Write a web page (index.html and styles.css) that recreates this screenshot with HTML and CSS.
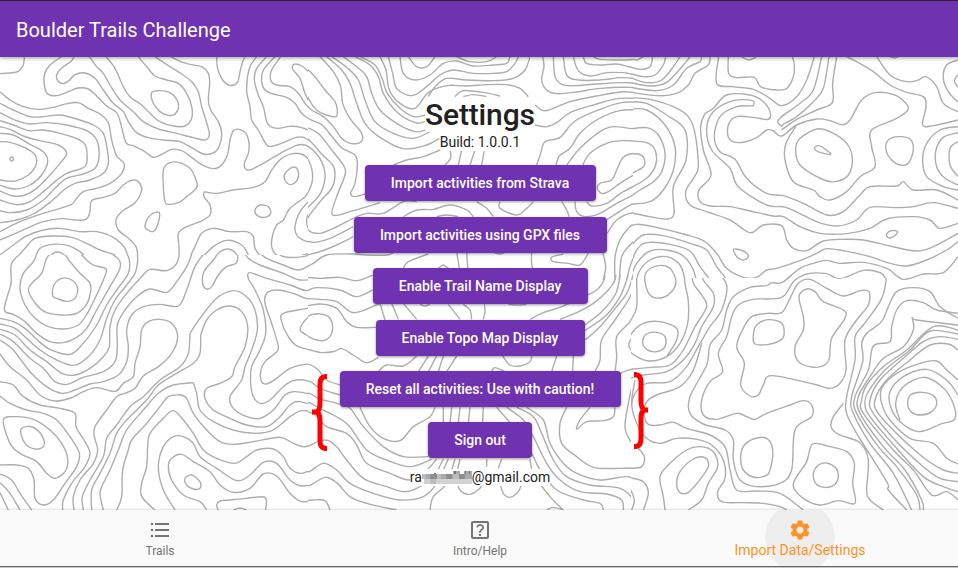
FILE: index.html
```html
<!DOCTYPE html>
<html lang="en">
<head>
<meta charset="utf-8">
<title>Boulder Trails Challenge</title>
<link rel="stylesheet" href="styles.css">
</head>
<body>
<header class="appbar">Boulder Trails Challenge</header>
<main class="content">
  <svg class="topo" id="topo" width="958" height="568" viewBox="0 0 958 568" aria-hidden="true"></svg>
  <h1 class="heading"><span>Settings</span></h1>
  <p class="build"><span>Build: 1.0.0.1</span></p>
  <div class="actions">
    <button class="btn strava">Import activities from Strava</button>
    <button class="btn gpx">Import activities using GPX files</button>
    <button class="btn names">Enable Trail Name Display</button>
    <button class="btn map">Enable Topo Map Display</button>
    <button class="btn reset">Reset all activities: Use with caution!</button>
    <button class="btn signout">Sign out</button>
  </div>
  <p class="email"><span>ra<i class="mosaic"><svg width="50" height="14" viewBox="0 0 50 14" shape-rendering="crispEdges"><path fill="#aaa" d="M0 0h50v8H0z"/><path fill="#d2d2d2" d="M2 8h48v5H2z"/><path fill="#8e8e8e" d="M8 3h7v5H8zM24 3h6v5h-6zM37 3h6v5h-6z"/><path fill="#bcbcbc" d="M0 3h4v5H0zM15 3h4v5h-4zM31 3h6v5h-6z"/><path fill="#fff" d="M0 0h31v3H0zM38 0h4v3h-4z"/><path fill="#777" d="M12 2h2v1h-2zM32 0h2v3h-2zM43 0h1v3h-1zM47 0h1v3h-1z"/><path fill="#bdbdbd" d="M8 8h6v5H8z"/></svg></i>@gmail.com</span></p>
  <svg class="brace left" width="16" height="77" viewBox="0 0 16 77"><path d="M15 2.5H13.5Q8 3 8 10V29Q8 37 4 38 8 39 8 46V66Q8 74 13 74.500H15M0 38H6"/></svg>
  <svg class="brace right" width="16" height="77" viewBox="0 0 16 77"><path d="M1 2.500H2.500Q8 3 8 10V29Q8 37 12 38 8 39 8 46V66Q8 74 3 74.500H1M10 38H15"/></svg>
</main>
<nav class="tabs">
  <a class="tab">
    <svg width="24" height="24" viewBox="0 0 24 24"><path d="M8 6h14v2H8zM8 12h14v2H8zM8 18h14v2H8z" transform="translate(-1 -1)"/><circle cx="4" cy="6" r="1.300"/><circle cx="4" cy="12" r="1.300"/><circle cx="4" cy="18" r="1.300"/></svg>
    <span>Trails</span>
  </a>
  <a class="tab">
    <svg width="24" height="24" viewBox="0 0 24 24"><path fill-rule="evenodd" d="M5 3h14a2 2 0 0 1 2 2v14a2 2 0 0 1-2 2H5a2 2 0 0 1-2-2V5a2 2 0 0 1 2-2zm0 2v14h14V5z"/><path d="M11 16h2v2h-2zM12.600 6C10.500 5.800 8.600 7.200 8.300 9.200l1.700.4c.2-1.200 1.200-2 2.400-1.900 1 .1 1.800.9 1.800 1.900 0 1.600-3.200 2-3.200 5.200h1.800c0-2.400 3.200-2.600 3.200-5.300C16 7.700 14.600 6.200 12.600 6z"/></svg>
    <span>Intro/Help</span>
  </a>
  <a class="tab active">
    <svg width="24" height="24" viewBox="0 0 24 24"><path d="M19.140 12.940c.04-.3.060-.61.060-.94 0-.32-.02-.64-.07-.94l2.030-1.580c.18-.14.23-.41.12-.61l-1.920-3.320c-.12-.22-.37-.29-.59-.22l-2.390.96c-.5-.38-1.030-.7-1.620-.94l-.36-2.540c-.04-.24-.24-.41-.48-.41h-3.840c-.24 0-.43.17-.47.41l-.36 2.540c-.59.24-1.130.57-1.620.94l-2.390-.96c-.22-.08-.47 0-.59.22L2.740 8.870c-.12.21-.08.47.12.61l2.030 1.580c-.05.3-.09.63-.09.94s.02.64.07.94l-2.030 1.580c-.18.14-.23.41-.12.61l1.920 3.320c.12.22.37.29.59.22l2.390-.96c.5.38 1.030.7 1.620.94l.36 2.540c.05.24.24.41.48.41h3.840c.24 0 .44-.17.47-.41l.36-2.540c.59-.24 1.130-.56 1.620-.94l2.390.96c.22.08.47 0 .59-.22l1.920-3.320c.12-.22.070-.47-.12-.61l-2.010-1.580zM12 15.600c-1.980 0-3.600-1.620-3.600-3.600s1.620-3.600 3.600-3.600 3.600 1.620 3.600 3.600-1.620 3.600-3.600 3.600z"/></svg>
    <span>Import Data/Settings</span>
  </a>
</nav>
<div class="edge"></div>
<script src="topo.js"></script>
</body>
</html>
```
FILE: styles.css
```css
* { box-sizing: border-box; }
html { overflow: hidden; }
body {
  margin: 0;
  width: 960px;
  height: 568px;
  overflow: hidden;
  display: flex;
  flex-direction: column;
  font-family: Roboto, "Liberation Sans", sans-serif;
  color: #212121;
  background: #fff;
}
.appbar {
  flex: none;
  height: 57px;
  padding-left: 16px;
  border-top: 1px solid #2b2233;
  background: #6f32b1;
  color: #fff;
  font-size: 20px;
  line-height: 58px;
  position: relative;
  z-index: 2;
  box-shadow: 0 1px 4px rgba(0, 0, 0, .4);
}
.content {
  flex: none;
  height: 453px;
  padding-top: 40px;
  position: relative;
  display: flex;
  flex-direction: column;
  align-items: center;
}
.topo { position: absolute; left: 0; top: -57px; }
.topo path { fill: none; stroke: #adadad; stroke-width: 4.2; }
.heading, .build, .email { margin: 0; position: relative; white-space: nowrap; }
.heading span, .build span, .email > span { display: block; background: #fff; }
.heading { font-size: 30px; font-weight: 500; line-height: 35px; width: 110px; }
.heading span { letter-spacing: -.15px; }
.build { font-size: 14px; line-height: 17px; margin-top: 2px; }
.actions {
  position: relative;
  display: flex;
  flex-direction: column;
  align-items: center;
  gap: 15.4px;
  margin-top: 14.4px;
}
.btn {
  height: 36px;
  padding: 0;
  border: 0;
  border-radius: 4px;
  background: #6f32b1;
  color: #fff;
  font: 500 14px/36px Roboto, sans-serif;
  white-space: nowrap;
  box-shadow: 0 1px 3px rgba(0, 0, 0, .4);
}
.strava { width: 231px; }
.gpx { width: 253px; }
.names { width: 215px; }
.map { width: 209px; }
.reset { width: 281px; }
.signout { width: 104px; }
.email { font-size: 14px; line-height: 17px; margin-top: 10.6px; }
.email > span { display: flex; height: 17px; }
.mosaic { display: block; width: 50px; height: 14px; padding-top: 2px; }
.mosaic svg { display: block; }
.brace { position: absolute; }
.brace path { fill: none; stroke: #f00; stroke-width: 5; }
.brace.left { left: 312px; top: 317px; }
.brace.right { left: 633px; top: 315px; }
.tabs {
  flex: none;
  height: 56px;
  display: flex;
  position: relative;
  background: #fafafa;
  box-shadow: 0 -1px 2px rgba(0, 0, 0, .12);
}
.tab {
  flex: 1;
  display: flex;
  flex-direction: column;
  align-items: center;
  padding-top: 8px;
  color: #757575;
  font-size: 12px;
  line-height: 14px;
  overflow: hidden;
}
.tab svg { fill: currentColor; flex: none; }
.tab span { margin-top: 2px; }
.active {
  color: #ff9226;
  font-size: 14px;
  line-height: 16px;
  background: radial-gradient(circle at 50% 27px, #eee 34.5px, transparent 35px);
}
.active span { margin-top: 0; }
.edge { height: 2px; background: #c8c8c8; border-top: 1px solid #666; }
```
FILE: topo.js
```js
// Contour lines, one sheet per map tile. Points are in thirds of a pixel
// from the tile's origin; a trailing z closes the contour.
var sheets = [
{ o: [0, 0], c: [0, 57, 308, 198], l: `
73,170 70,195 55,214 30,219 0,221
222,170 214,183 185,204 170,225 174,243 190,251 207,242 225,224 255,219 285,235 310,270 340,310 370,335 385,365 410,398 445,413 490,420 540,425 575,443 610,462 640,459 658,438 665,400 655,365 632,330 625,300 629,250 625,220 605,200 570,193 540,184 512,170
185,170 150,195 133,225 135,265 145,283 170,287 200,277 235,264 265,267 290,288 320,318 350,338 362,370 378,428 400,437 430,452 460,472 485,463 515,448 545,452 575,472 605,494 640,506 665,495 683,462 690,420 700,392 718,388 738,400 747,430 745,460 733,490 738,508 755,508 790,490 850,455 890,436 915,435 935,448 965,480
268,170 290,200 310,220 330,255 360,300 400,335 430,365 475,387 530,400 580,413 615,420 628,405 622,375 605,320 595,275 575,245 545,222 505,197 465,170
318,170 345,205 370,260 390,290 425,315 450,340 480,365 520,378 555,378 575,355 575,320 560,280 535,250 500,240 465,228 440,200 415,170
455,278 480,272 510,278 530,298 536,320 525,342 505,346 480,335 460,310z
650,170 653,205 668,240 690,256 712,247 720,215 728,185 735,170
770,170 748,205 740,270 750,320 755,360 775,390 800,435 820,438 850,428 890,412 920,417 965,460
800,170 770,205 763,240 775,285 790,320 800,365 812,380 835,385 870,379 905,383 960,405
825,170 790,210 785,245 795,270 820,282 860,292 885,310 905,340 930,358 965,372
842,170 815,210 812,240 830,255 870,260 895,280 915,310 935,330 965,345
960,255 930,220 905,198 882,193 878,208 900,235 915,280 935,315 960,330
0,275 30,300 70,320 115,328 160,322 200,311 235,308 265,325 300,342 325,368 335,420 350,468 372,490 365,520 330,550 290,565 250,575 230,595 215,613 180,625 120,643 60,665 0,695
0,310 40,330 90,350 130,350 180,345 230,357 280,375 310,400 322,450 325,490 310,520 270,540 225,550 195,567 150,607 100,642 50,660 0,668
0,338 50,362 90,372 140,368 200,375 260,392 290,420 297,470 285,505 250,522 200,535 165,565 130,600 80,630 30,638 0,632
0,362 40,375 85,392 130,390 180,400 235,418 258,440 260,490 245,505 200,520 165,545 130,575 90,605 50,614 0,600
0,380 30,388 70,408 120,422 175,435 200,460 180,490 145,530 110,565 75,585 40,588 0,573
0,400 40,405 85,430 130,455 143,485 125,525 90,555 45,567 0,556
0,425 30,427 75,443 105,465 108,495 85,525 50,542 20,543 0,539
29,477 35,471 41,477 35,483z
415,780 408,740 385,715 355,690 348,660 365,635 405,608 425,570 415,545 395,541 370,555 345,580 310,592 275,602 270,635 258,658 225,660 185,656 130,665 80,685 40,703 0,720
385,780 375,745 340,712 290,695 240,695 180,685 130,690 80,708 40,735 0,765
360,780 340,763 300,750 260,730 215,712 160,708 105,715 75,745 45,780
265,780 240,755 205,737 160,733 120,745 103,780
140,780 160,760 180,757 205,775 210,782
490,510 505,490 535,487 570,505 588,540 590,563 560,590 535,608 505,613 495,605 490,560z
477,637 455,642 438,665 437,685 458,695 470,682 478,655z
613,575 650,580 700,570 760,562 795,545 815,510 845,475 885,460 920,472 940,510 935,555 915,590 870,625 850,660 830,675 818,705 815,740 830,765 870,773 910,765 960,752
613,575 612,590 630,615 630,645 600,665 560,680 535,700 537,740 538,782
852,530 868,507 888,503 896,525 885,548 865,552z
765,630 780,615 805,620 812,640 795,652 772,647z
960,580 920,610 895,645 885,690 900,715 930,727 960,728
960,620 930,635 920,660 925,685 945,697 960,699
565,780 585,740 605,700 640,685 690,695 740,695 760,710 765,745 790,780
600,780 640,740 680,721 725,735 745,765 752,780
640,780 660,755 685,747 708,760 713,780` },
{ o: [0, 250], c: [0, 255, 308, 256], l: `
20,0 0,14
75,0 35,40 33,100 13,178 40,193 75,215 110,250 150,275 190,278 230,262 260,235 290,180 330,110 358,60 360,35 340,15 295,0
115,0 100,35 70,70 60,115 75,165 105,205 145,230 190,237 235,225 262,190 285,145 310,90 318,57 280,45 250,20 230,0
85,120 100,95 125,70 140,25 160,8 190,10 210,35 240,70 270,100 270,135 255,170 225,192 185,195 140,188 110,165z
158,138 162,105 185,85 215,90 233,115 225,145 200,154 175,147z
0,205 40,215 75,235 110,268 150,298 210,313 250,280 290,225 320,165 350,120 385,70 388,30 375,0
0,222 45,235 80,265 120,300 170,330 220,346 265,320 300,270 320,205 345,150 380,105 405,70 413,30 410,0
0,238 45,255 90,300 140,335 185,370 225,375 270,355 310,320 328,290 330,230 345,180 380,130 425,80 450,58 500,62 530,40 540,0
0,252 40,275 90,325 130,355 165,395 200,403 250,382 310,365 345,335 352,290 352,225 375,180 410,140 450,117 500,127 530,95 560,50 580,0
0,270 40,300 90,365 140,410 185,430 225,420 270,402 310,395 355,375 380,335 385,290 380,240 395,195 430,170 480,163 535,168 560,120 585,50 620,0
0,312 30,350 80,390 120,435 165,453 215,443 250,425 290,413 345,424 370,400 400,380 405,340 420,290 425,240 445,215 480,208 515,220 533,260 515,310 475,350 430,378 405,415 375,430 350,440 320,480 285,530 283,560 293,600 280,640 240,690 220,740 222,780
0,395 40,405 70,440 120,465 180,475 225,490 228,530 255,575 270,610 255,650 215,700 190,750 188,780
0,438 30,460 80,480 130,490 170,510 210,560 238,610 230,650 195,700 160,750 130,765 105,745 102,690 85,655 50,645 0,645
10,510 45,500 100,508 150,540 185,580 203,625 195,665 165,685 140,670 110,635 60,610 30,580z
62,540 85,529 110,538 130,565 130,590 105,597 75,580z
0,672 35,690 60,730 95,780
0,698 30,730 60,780
0,728 25,780
690,0 712,15 708,40 680,50 655,75 635,110 620,117 608,100 612,65 640,30 660,5z
730,0 745,25 780,45 850,70 900,90 960,85
768,0 800,25 850,45 895,60 930,45 960,30
820,0 850,20 890,22 930,15 950,0
960,110 920,122 870,105 800,85 750,68 745,85 765,120 790,180 797,250 780,300 755,350 752,400 760,440 780,460 810,450 850,410 880,392 920,392 960,415
960,145 920,146 880,130 830,120 800,130 795,160 815,220 835,290 825,310 795,335 782,365 785,395 800,402 830,385 870,355 920,343 960,350
570,250 600,205 650,145 700,122 740,140 765,180 772,240 755,300 735,350 725,390 690,440 700,475 740,500 780,505 820,480 855,435 880,425 920,430 960,445
602,255 620,210 650,180 690,168 725,185 743,230 735,290 705,350 695,380 660,400 620,415 615,445 640,480 690,505 740,525 800,530 840,500 870,465 900,455 960,475
570,250 565,310 540,350 480,390 430,440 390,470 350,525 320,565 310,620 270,690 247,740 250,780
602,255 600,310 580,340 530,370 475,405 440,450 380,510 350,550 330,610 300,670 275,720 275,780
580,398 520,405 475,430 430,480 380,540 355,600 330,660 305,710 300,735 310,780
580,398 590,430 600,480 640,515 700,540 770,550 820,540 870,500 905,482 940,490 960,515
350,780 365,740 368,660 385,600 395,570 440,520 480,470 505,440 540,435 560,445 580,490 620,540 660,575 700,583 760,575 840,562 880,580 915,590 960,575
465,780 425,740 425,700 440,650 443,590 450,550 490,505 520,482 550,510 580,550 610,600 650,625 705,640 740,620 770,600 820,597 850,620 870,655 905,670 960,645
525,780 490,720 475,650 490,590 520,560 550,560 580,580 600,620 650,655 710,692 750,675 790,637 830,640 870,690 905,708 960,697
620,780 600,755 550,735 515,690 505,650 515,625 545,613 580,635 630,665 660,705 700,727 750,715 790,672 830,678 870,730 905,755 960,748
555,685 575,675 600,695 600,715 580,717 560,705z
655,780 650,765 660,753 690,750 740,745 795,742 797,780
700,780 720,774 740,780
960,162 920,175 850,190 845,215 865,260 895,290 960,305
960,192 930,197 905,225 902,243 930,260 960,270` },
{ o: [300, 50], c: [308, 57, 222, 218], l: `
-18,43 10,50 40,75 75,120 105,155 112,180 108,200 80,195 50,180 25,145 10,100 -18,60
60,20 100,65 122,110 128,160 150,205 185,250 182,277 150,280 125,265 100,230 70,200 35,180 15,160 0,140
80,20 125,60 150,100 170,160 195,220 240,262 310,296 380,285 418,265
95,20 140,52 175,90 195,150 225,215 280,250 340,265 390,245
130,20 170,50 200,80 215,130 240,180 290,220 345,245 375,240
165,20 210,45 235,80 250,130 290,185 345,218 375,215
180,20 225,45 246,85 262,130 300,175 340,200 375,195
240,20 258,60 268,120 300,160 345,175 385,128 440,107 500,108 560,104 620,104 660,115 685,140
265,20 278,70 290,115 335,137 380,110 420,75 460,60 520,70 580,70 620,65 645,40 655,20
385,140 405,110 440,85 500,90 580,92 640,85 675,60 690,20
300,20 310,70 345,90 390,75 430,40 470,33 520,48 580,45 620,40 630,20
325,20 350,50 380,50 405,20
470,20 510,35 560,35 590,20
465,140 490,122 550,127 600,138
490,140 520,134 560,140
0,185 30,208 65,224 90,252 125,293 165,315 172,345 165,400 152,430 165,440 195,432
0,232 30,236 60,255 95,300 130,345 135,375 110,440 98,495 160,482 240,458
0,263 25,268 65,312 98,345 105,375 95,415 60,455 20,510 25,540 60,550 100,535 160,505 200,490 250,490 310,455 350,455
0,286 30,293 65,335 75,385 55,440 0,492
0,312 25,330 38,380 25,425 0,445
0,565 40,577 90,565 160,530
0,620 60,605 110,585 160,560
0,660 40,640 80,615 160,612 200,615 260,615 280,608
0,685 80,685 140,680 190,688 215,680
310,655 325,635 385,612
415,655 430,645 445,655
280,345 320,330 370,320 420,300
450,300 452,325 435,345
485,300 475,345
525,300 510,345
553,300 545,345
310,500 350,480 400,478 450,465 500,480 520,500
410,500 440,495 475,500
530,455 560,475 580,500
600,455 600,475 650,495 680,475 700,455
470,605 478,655
500,605 503,655
575,605 600,612 620,605` },
{ o: [520, 50], c: [530, 57, 103, 223], l: `
68,20 72,50 65,90 80,120 110,131 170,126 240,115 330,112 390,121
100,20 105,80 125,103 160,107 230,102 300,98 340,99 390,108
130,20 140,75 175,90 240,90 300,83 340,85 390,97
160,20 175,62 210,78 260,68 310,68 340,73 390,82
190,20 200,40 240,45 290,42 330,51 365,57 390,48
220,20 240,28 300,30 345,28 365,20
45,165 70,182 100,175 150,155 230,138 300,126 340,127 390,135
45,225 80,230 110,218 150,188 220,165 300,145 390,148
50,345 62,310 75,275 120,262 165,213 240,178 310,157 390,160
108,345 118,318 150,295 180,250 230,210 300,182 390,180
140,345 180,295 240,245 280,230 340,236 390,233
188,345 210,310 260,280 310,272 390,277
345,310 310,322 290,360 275,390 240,400 232,415 245,430 265,425 300,400 350,369 372,350 372,320z
200,455 215,468 260,460 310,425 390,385
165,455 170,485 195,500 240,490 290,460 340,435 390,415
260,510 290,490 340,461 390,450
262,550 290,510 340,488 390,498
285,690 285,620 300,570 325,535 345,523 390,530
298,690 305,620 330,585 360,560 390,555
320,690 340,625 390,578
335,690 348,655 390,603
355,690 390,635
248,605 257,650 250,690
35,605 35,640 45,690
205,610 180,645 145,640 100,635 95,622 130,612
125,455 140,480 148,500
-60,455 -60,475 -10,495 20,475 40,455
20,0 28,30 20,50 0,70
-60,104 0,112 22,138` },
{ o: [300, 270], c: [308, 275, 323, 236], l: `
0,20 60,25 120,22 170,32 218,15
0,60 20,62 50,53 120,60 170,80 218,60
0,85 60,88 110,95 150,125 180,125 240,100
2,183 10,150 45,132 85,140 98,175 85,205 60,212 25,200z
0,112 60,102 110,115 140,155 170,172 228,172
0,232 60,247 100,245 125,236 160,255 200,278 235,262
235,305 260,285 310,288 350,258
0,284 30,284 55,300 80,330 120,345
0,332 30,334 60,355 120,375
0,365 30,371 60,387 110,400 150,415 190,470 250,530 310,560 384,560
240,100 255,150
275,100 295,148
310,100 350,148
360,103 375,108 390,103
445,103 480,148
490,103 510,120 515,148
553,103 555,125 550,148
625,103 655,105 680,103
690,148 730,128 780,112 840,85 890,60 912,30 915,0
780,148 830,128 880,100 925,60 945,30 948,0
855,165 905,125 945,75 958,30 962,0
855,182 920,135 960,80 980,30 988,0
855,210 900,170 950,110 980,70 995,30 1000,0
885,305 900,270 905,210 945,150 985,90 1010,40
945,305 950,260 950,200 990,155 1010,110
1030,180 995,205 988,232 1020,265
955,330 965,308 1000,297
820,258 818,305
385,258 355,305
410,258 385,305
430,258 415,305
470,258 440,305
608,258 630,285 660,288 690,275 695,258
575,305 585,293 615,305
770,258 755,305
180,412 210,470 250,505 300,512 340,470 390,440 405,412
0,395 30,399 60,416 100,435 145,465 200,540 260,570 330,590 395,568
0,423 20,424 45,435 80,470 140,490 170,525 200,580 270,610 330,630 380,600 410,567
0,525 20,530 60,512 85,512 110,530 140,570 190,625 260,650 310,665 350,655 400,620 430,567
0,610 30,604 70,580 110,600 150,640 220,670 300,690 370,680 410,640 445,567
0,647 30,646 75,622 110,638 150,680 200,700 290,720
0,693 40,690 75,692 90,720
390,720 400,680 440,640 465,567
480,567 470,620 480,660 510,673 540,655 545,640
430,412 430,458
455,412 450,458
480,412 475,458
510,412 505,458
550,412 548,458
560,567 560,590
605,567 595,595
600,640 610,670 630,682 655,665 665,640
590,412 640,470 690,540 720,600 770,660 850,690 900,700 910,720
620,412 670,450 700,500 740,580 780,630 840,665 920,672 965,690 970,720
650,412 700,440 725,490 760,570 800,620 870,645 960,655 1000,690 1000,720
680,412 730,450 750,520 790,580 830,610 900,630 980,620 1030,640 1045,680
690,567 700,610 750,680 790,720
800,412 780,460 785,520 830,560 880,592 960,595 1020,590 1033,570 1020,540
870,412 840,450 830,478 860,455 910,452 940,440 945,412
1000,330 985,400 975,470 990,510 1020,540
740,720 760,712 790,720` },
{ o: [630, 50], c: [633, 57, 325, 221], l: `
0,50 30,58 60,50 68,20
0,25 20,30 40,20
0,70 40,80 75,75 100,45 107,20
0,82 50,98 95,90 130,50 150,20
0,97 60,108 110,97 160,45 180,20
0,112 80,122 130,105 170,55 210,35 215,20
0,126 80,137 140,130 175,105 195,70 235,45 240,20
0,143 60,148 130,170 175,200 195,250 205,350 190,385 167,425 180,465 230,485 300,510 360,548 400,525 455,527 470,570 490,595 530,602 580,573 640,568 700,570 780,588 860,603 910,590 984,550
0,155 50,160 110,195 165,240 168,330 130,410 132,490 110,507 60,500 0,488
0,177 50,180 105,225 135,290 130,360 100,420 60,455 0,463
0,237 50,233 85,255 105,310 95,365 70,395 30,420 0,440
0,273 50,278 75,300 77,345 50,385 0,415
0,313 25,312 42,325 40,350 0,373
266,20 260,100 310,110 370,118 420,145 455,167 500,140 530,90 553,20
295,20 296,70 320,83 373,82 395,112 465,118 490,80 493,45 487,20
335,20 355,30 378,22
225,190 250,175 290,135 360,135 400,155 420,185 415,208 375,203 320,200 295,225 297,265 330,278 380,263 410,240 430,243 455,258 500,225 560,207 600,212 635,224 660,210 695,150 740,127 800,138 835,175 800,205 725,240 725,290 735,350 690,380 650,425 600,450 570,440 550,420 490,395 465,330 468,280 500,225
225,190 212,230 220,300 243,375 207,420 210,455 240,468 300,470 360,483 430,498 460,500 510,530 570,550 650,551 720,535 770,507 850,500 900,510 930,535 984,520
370,168 367,152 310,152 250,185 230,235 245,300 300,355 325,410 410,465 470,473 560,515 620,528 680,510 720,472 800,473 850,470 910,458 984,475
370,168 320,170 270,200 253,260 270,305 315,328 350,385 410,430 460,437 520,460 590,495 640,485 690,435 720,410 800,408 820,395 850,420 920,420 984,450
575,20 550,120 510,160 455,200 443,215 455,228 460,222
597,20 580,115 550,155 500,200 460,222
620,20 608,100 607,158 560,180 500,208 455,240
497,300 510,265 560,237 600,245 650,280 667,325 655,375 615,395 575,387 510,345z
553,295 565,287 585,297 602,313 570,307z
768,300 775,270 805,260 840,267 850,300 835,340 810,345 785,330z
650,20 680,35 730,65 780,105 830,127 880,140 888,170 878,225 910,227 984,210
740,20 780,75 830,95 865,90 888,80 920,110 940,160 984,185
780,20 795,24 805,20
984,30 950,45 940,85 955,125 984,157
984,75 973,92 984,112
984,230 930,240 890,280 878,330 890,380 940,410 984,420
984,248 940,262 918,300 920,350 945,385 984,405
984,275 960,295 960,345 984,380
0,535 20,523 80,532 160,552 220,572 260,610 290,655 340,682 380,682 410,660 440,655 510,632 560,610 590,596 640,602 720,620 780,640 830,648 890,630 950,600 984,575
0,590 40,555 100,557 180,580 230,600 260,650 290,690 292,720
0,650 20,600 50,578 120,583 180,603 210,650 240,690 257,720
0,690 20,640 60,603 110,600 160,618 190,660 205,720
20,720 25,670 60,630 110,620 150,645 165,690 168,720
45,700 50,665 85,647 120,655 138,695 125,725 100,742 65,738z
310,598 340,603 355,618 345,629 325,625z
770,552 785,542 803,545 790,560 775,563z
345,720 370,708 410,707 430,698 455,698 510,655 550,640 590,631 630,640 700,637 770,655 820,688 880,672 940,668 984,620
475,720 490,695 530,672 590,671 630,687 700,661 750,668 767,690 762,720
500,720 520,695 550,687 600,720
525,718 540,714 555,720
780,715 820,713 880,716` },
{ o: [630, 270], c: [631, 278, 327, 233], l: `
0,155 20,110 20,20 25,0
0,50 5,0
45,35 50,5 85,-13 120,-5 138,35 120,70 90,84 60,75z
162,0 165,40 175,95 173,160 150,220 110,260 60,273 20,260 -10,230 5,190 40,160 90,155 140,175 140,210 110,260
38,215 50,192 80,187 105,200 105,230 80,245 50,238z
0,298 60,292 120,285 160,240 195,170 230,110 215,75 190,40 185,0
0,325 40,315 110,305 160,270 195,220 215,170 250,110 250,70 220,30 218,0
0,420 15,370 50,340 120,335 170,290 210,220 240,170 275,120 290,45 255,0
215,220 190,300 150,350 80,375 50,395 42,430 55,463 90,465 130,457 170,475 240,495 285,530 300,600 320,660 380,663 450,670 520,720
15,330 5,400 20,460 50,505 90,520 140,505 200,508 245,525 280,570 285,625 263,665 275,695 330,698 400,700 450,710 470,720
300,0 350,22 400,10 415,0
505,0 455,38 425,38 410,47 360,52 310,80 290,120 275,180 240,225 230,285 180,380 180,430 220,462 285,480 310,510 310,570 330,630 380,650 450,640 485,600 495,480 545,440 545,405 520,392 480,405 410,430 375,448 350,440 320,430 260,448 220,435 215,390 240,335 278,305 265,250 290,200 305,140 325,105 370,88 455,82 490,35 530,10 590,8 625,25 660,15 700,0 760,10 767,40 750,95 700,165 675,200 675,270 650,380 650,430 680,490 770,635 775,660 830,720
365,140 410,130 455,128 480,85 505,40 540,28 590,55 640,78 690,62 717,65 715,105 680,150 645,210 648,300 630,340 600,355 550,342 425,317 400,345 385,375 360,378 332,345 343,280 320,230 340,175z
370,195 380,165 415,149 455,160 462,195 450,212 415,223 375,222z
507,80 530,57 555,65 580,95 640,120 645,145 605,205 598,265 580,287 545,291 505,275 495,230 520,180 520,140z
780,0 820,28 880,12 920,12 950,0
984,145 930,110 900,65 850,53 800,65 775,110 755,155 710,190 695,220 698,275 665,380 670,430 720,520 790,610 845,720
984,165 860,150 848,145 850,180 820,230 760,265 720,320 685,380 690,430 760,530 825,600 875,690 880,720
984,130 920,120 880,98 830,92 800,120 785,170 780,215 730,228 715,300 675,380 680,430 745,530 800,590 860,675 870,720
984,180 910,170 830,240 760,290 710,345 695,390 700,430 790,540 850,600 905,675 950,665 984,690
984,192 900,183 840,240 765,300 715,365 705,400 720,440 800,535 880,620 940,650 984,665
984,208 930,200 880,215 820,265 750,330 720,390 730,430 800,515 880,590 930,625 984,635
984,240 955,222 900,225 840,270 770,330 735,390 745,430 810,500 890,570 940,600 984,610
984,330 950,300 920,273 870,280 800,310 755,355 755,400 780,450 840,505 910,520 950,565 984,582
984,375 950,330 890,298 820,320 780,365 782,410 810,455 867,485 930,463 975,445 965,390 930,345 880,322 820,350 797,400 810,450
833,402 842,375 875,367 910,377 920,402 905,425 875,435 845,427z
640,400 610,440 603,470 625,493 690,518 715,570 710,660 720,690 760,720
548,522 600,530 650,545 673,580 668,640 675,700 625,692 570,705 520,685 490,650 500,620 530,575z
550,620 560,590 590,579 620,597 623,630 600,651 565,647z
332,565 340,530 370,507 410,505 428,540 420,600 405,618 370,621 340,600z
105,720 100,680 90,620 120,580 170,540 210,530 250,545 263,590 235,640 215,690 175,720
140,640 150,605 190,567 225,563 235,590 205,635 175,667 150,668z
0,595 35,590 43,560 20,530
0,623 40,635 55,670 40,720
0,655 13,690 5,720` }
];

function smooth(text) {
  var closed = /z$/.test(text);
  var p = text.replace('z', '').trim().split(/\s+/).map(function (s) { return s.split(',').map(Number); });
  var n = p.length, d = 'M' + p[0];
  function at(i) { return closed ? p[(i + n) % n] : p[Math.max(0, Math.min(n - 1, i))]; }
  for (var i = 0; i < (closed ? n : n - 1); i++) {
    var a = at(i - 1), b = at(i), c = at(i + 1), e = at(i + 2);
    d += 'C' + [b[0] + (c[0] - a[0]) / 6, b[1] + (c[1] - a[1]) / 6,
      c[0] - (e[0] - b[0]) / 6, c[1] - (e[1] - b[1]) / 6, c[0], c[1]].join(' ');
  }
  return d + (closed ? 'Z' : '');
}

document.getElementById('topo').innerHTML = sheets.map(function (s, i) {
  return '<clipPath id="tile' + i + '"><rect x="' + s.c[0] + '" y="' + s.c[1] + '" width="' + s.c[2] + '" height="' + s.c[3] + '"/></clipPath>' +
    '<g clip-path="url(#tile' + i + ')"><g transform="translate(' + s.o + ') scale(.33333)">' +
    s.l.trim().split('\n').map(function (t) { return '<path d="' + smooth(t.trim()) + '"/>'; }).join('') + '</g></g>';
}).join('');
```
